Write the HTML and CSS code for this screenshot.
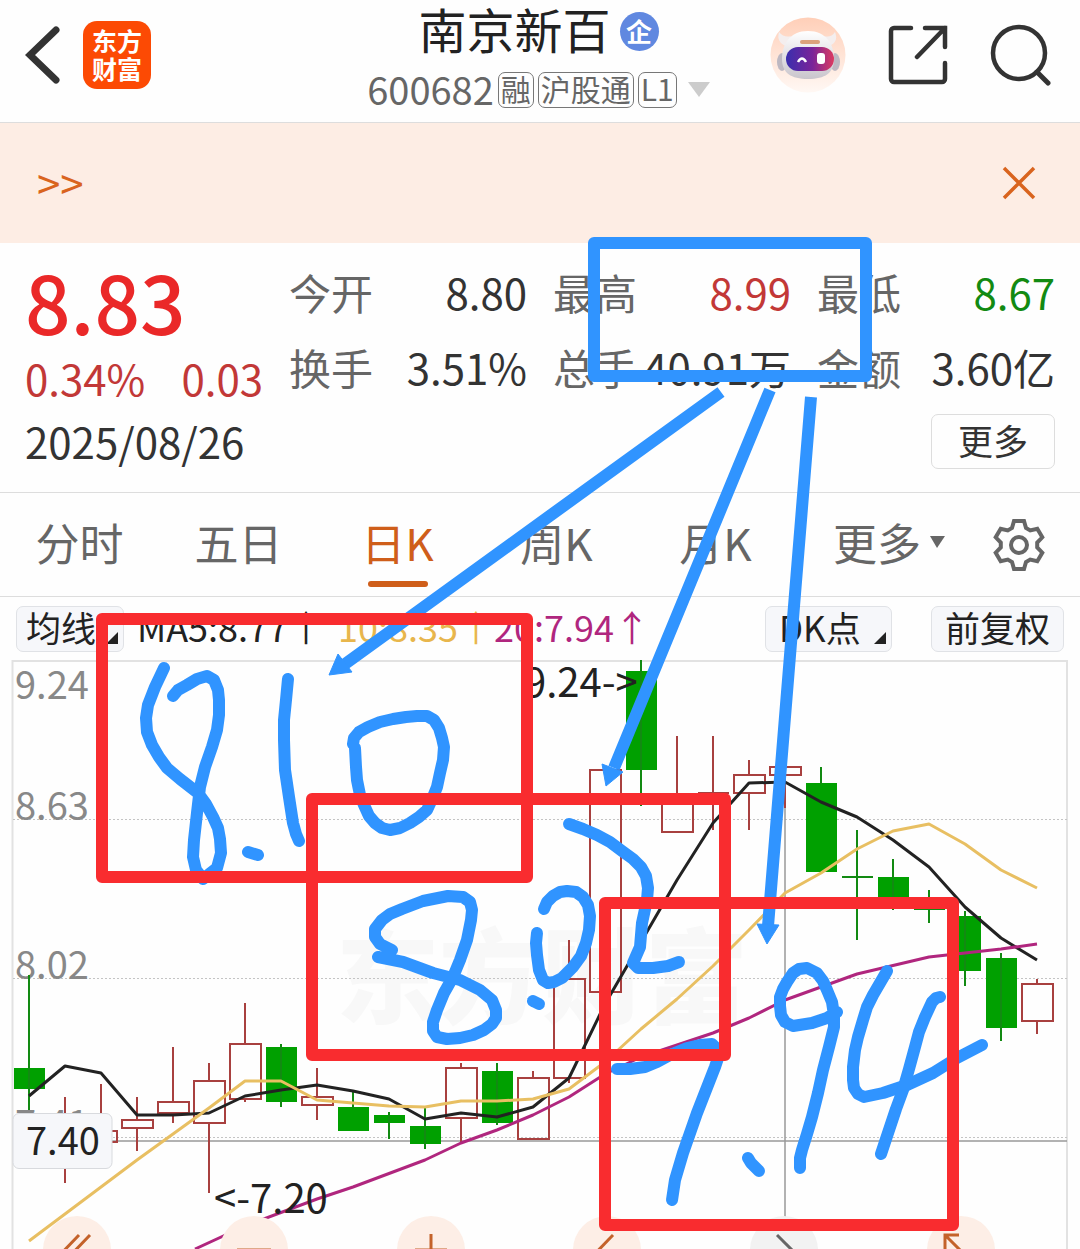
FILE: index.html
```html
<!DOCTYPE html>
<html lang="zh-CN">
<head>
<meta charset="utf-8">
<meta name="viewport" content="width=device-width, initial-scale=1">
<title>南京新百 600682</title>
<link rel="stylesheet" href="styles.css">
</head>
<body>
<div class="page">
  <header class="header">
    <div class="header-left">
      <button class="icon-btn" type="button" aria-label="返回">
        <svg width="36" height="58" viewBox="0 0 36 58"><path d="M31 4 5 29 31 54" fill="none" stroke="#333" stroke-width="7" stroke-linecap="round"/></svg>
      </button>
      <a class="logo" href="#"><span>东方</span><span>财富</span></a>
    </div>
    <div class="header-title">
      <h1 class="name">南京新百<span class="badge">企</span></h1>
      <button class="code" type="button">
        <span class="code-number">600682</span><span class="tag">融</span><span class="tag">沪股通</span><span class="tag">L1</span>
        <svg class="code-caret" width="22" height="16" viewBox="0 0 22 16"><path d="M0 0h22L11 15z" fill="#ccc"/></svg>
      </button>
    </div>
    <div class="header-right">
      <button class="icon-btn" type="button" aria-label="助手">
        <svg width="76" height="76" viewBox="0 0 76 76">
          <defs>
            <linearGradient id="halo" x1="0" y1="0" x2="0" y2="1"><stop offset="0" stop-color="#ffcfb8"/><stop offset="1" stop-color="#fff8f4"/></linearGradient>
            <linearGradient id="shell" x1="0" y1="0" x2="0" y2="1"><stop offset="0" stop-color="#fff"/><stop offset="1" stop-color="#c9c5cc"/></linearGradient>
            <linearGradient id="visor" x1="0" y1="0" x2="1" y2="0"><stop offset="0" stop-color="#3a2fae"/><stop offset=".55" stop-color="#7a2499"/><stop offset="1" stop-color="#dc3a60"/></linearGradient>
          </defs>
          <circle cx="38" cy="38" r="37.500" fill="url(#halo)"/>
          <path d="M9 15q5 6 12 4l-5 10q-10-4-7-14zM65 15q-4 6-11 4l5 10q10-4 6-14z" fill="#f4eeee"/>
          <ellipse cx="12" cy="45" rx="5" ry="9" fill="#bdb8c2"/><ellipse cx="65" cy="45" rx="5" ry="9" fill="#bdb8c2"/>
          <path d="M38 14c18 0 26 13 26 28 0 14-9 20-26 20S12 56 12 42c0-15 8-28 26-28z" fill="url(#shell)"/>
          <rect x="30" y="23" width="20" height="4" rx="2" fill="#dba27c"/>
          <rect x="16" y="30" width="48" height="24" rx="12" fill="url(#visor)"/>
          <path d="M28 45q4-7 8 0" fill="none" stroke="#fff" stroke-width="2.500"/>
          <rect x="47" y="36" width="8" height="11" rx="3" fill="#fff"/>
        </svg>
      </button>
      <button class="icon-btn" type="button" aria-label="分享">
        <svg width="60" height="60" viewBox="0 0 60 60"><path d="M23 3H6a3 3 0 0 0-3 3v48a3 3 0 0 0 3 3h48a3 3 0 0 0 3-3V38M57 22V3H37M57 3 29 32" fill="none" stroke="#333" stroke-width="4.500" stroke-linecap="round"/></svg>
      </button>
      <button class="icon-btn" type="button" aria-label="搜索">
        <svg width="62" height="62" viewBox="0 0 62 62"><path d="M47 48 58 59" stroke="#333" stroke-width="5" stroke-linecap="round"/><circle cx="29" cy="29" r="26" fill="none" stroke="#333" stroke-width="4.500"/></svg>
      </button>
    </div>
  </header>

  <section class="banner">
    <a class="banner-link" href="#">&gt;&gt;</a>
    <button class="icon-btn" type="button" aria-label="关闭">
      <svg width="34" height="34" viewBox="0 0 34 34"><path d="M2 2 32 32M32 2 2 32" stroke="#d9641e" stroke-width="3.500"/></svg>
    </button>
  </section>

  <section class="quote">
    <div class="quote-main">
      <div class="price">8.83</div>
      <div class="change"><span>0.34%</span><span>0.03</span></div>
      <time class="date" datetime="2025-08-26">2025/08/26</time>
    </div>
    <div class="quote-side">
      <dl class="stats">
        <div class="stat"><dt>今开</dt><dd>8.80</dd></div>
        <div class="stat"><dt>最高</dt><dd class="up">8.99</dd></div>
        <div class="stat"><dt>最低</dt><dd class="down">8.67</dd></div>
        <div class="stat"><dt>换手</dt><dd>3.51%</dd></div>
        <div class="stat"><dt>总手</dt><dd>40.91万</dd></div>
        <div class="stat"><dt>金额</dt><dd>3.60亿</dd></div>
      </dl>
      <button class="more" type="button">更多</button>
    </div>
  </section>

  <nav class="tabs">
    <a class="tab" href="#">分时</a>
    <a class="tab" href="#">五日</a>
    <a class="tab tab-active" href="#">日K</a>
    <a class="tab" href="#">周K</a>
    <a class="tab" href="#">月K</a>
    <button class="tab" type="button">更多<svg width="16" height="14" viewBox="0 0 16 14"><path d="M1 1h15L8 13z" fill="#666"/></svg></button>
    <button class="icon-btn" type="button" aria-label="设置">
      <svg width="54" height="54" viewBox="-27 -27 54 54" fill="none" stroke="#666" stroke-width="4"><path d="M-5-24H5L7-17 11.200-14.600 18.300-16.300 23.300-7.700 18.200-2.400V2.400L23.300 7.700 18.300 16.300 11.200 14.600 7 17 5 24H-5L-7 17-11.200 14.600-18.300 16.300-23.300 7.700-18.200 2.400V-2.400L-23.300-7.700-18.300-16.300-11.200-14.600-7-17z"/><circle r="8"/></svg>
    </button>
  </nav>

  <div class="indicators">
    <button class="chip" type="button">均线<svg width="12" height="12" viewBox="0 0 12 12"><path d="M12 0v12H0z" fill="#222"/></svg></button>
    <div class="averages">
      <span class="ma5">MA5:8.77↑</span>
      <span class="ma10">10:8.35↑</span>
      <span class="ma20">20:7.94↑</span>
    </div>
    <button class="chip chip-dk" type="button">DK点<svg width="12" height="12" viewBox="0 0 12 12"><path d="M12 0v12H0z" fill="#222"/></svg></button>
    <button class="chip" type="button">前复权</button>
  </div>

  <figure class="chart">
    <svg class="plot" viewBox="0 660 1080 589" role="img" aria-label="日K线图">
      <text class="watermark" x="336" y="1016">东方财富</text>
      <g fill="none" stroke="#e2e2e2" stroke-width="2"><path d="M12.500 1249V661H1067V1249"/></g>
      <path d="M13 819.500H1067M13 978.500H1067M13 1137.500H1067" stroke="#c4c4c4" stroke-dasharray="2 2"/>
      <path d="M13 1141H1067M785 807V1249" stroke="#999" stroke-width="1.500"/>
      <g class="axis">
        <text x="15" y="699">9.24</text>
        <text x="15" y="820">8.63</text>
        <text x="15" y="979">8.02</text>
        <text x="15" y="1138">7.41</text>
      </g>
      <g fill="none" stroke="#a8403f" stroke-width="2">
        <path d="M65 1097V1183M101 1084V1131M137 1097V1120M137 1128V1151M173 1047V1102M173 1113V1123M209 1063V1081M209 1123V1193M245 1003V1044M245 1099V1102M317 1068V1097M317 1105V1120M461 1063V1068M461 1118V1142M533 1071V1078M569 940V979M569 1078V1083M677 736V804M713 736V830M749 760V775M749 793V830M785 775V808"/>
        <path d="M86 1131h31v11H86zM122 1120h31v8h-31zM158 1102h31v11h-31zM194 1081h31v42h-31zM230 1044h31v55h-31zM302 1097h31v8h-31zM446 1068h31v50h-31zM518 1078h31v61h-31zM554 979h31v99h-31zM590 770h31v222h-31zM662 804h31v28h-31zM698 793h31M734 775h31v18h-31zM770 767h31v8h-31zM1022 984h31v37h-31zM1037 979v5M1037 1021v13"/>
      </g>
      <g fill="#00a000">
        <path d="M14 1068h31v21H14zM266 1047h31v55h-31zM338 1107h31v24h-31zM374 1115h31v8h-31zM410 1126h31v18h-31zM482 1071h31v52h-31zM626 671h31v99h-31zM806 783h31v89h-31zM878 877h31v30h-31zM950 916h31v55h-31zM986 958h31v70h-31z"/>
      </g>
      <path d="M29 975V1110M281 1044V1107M353 1091V1108M389 1112V1139M425 1108V1149M497 1063V1125M641 660V806M821 767V784M857 830V940M842 877h31M893 859V910M929 890V923M914 909h31M965 911V986M1001 953V1041" stroke="#128a12" stroke-width="2"/>
      <g fill="none" stroke-width="3" stroke-linejoin="round">
        <path stroke="#222" d="M29 1096 65 1066 101 1073 137 1115 173 1115 209 1113 245 1096 281 1090 317 1085 353 1091 389 1099 425 1119 461 1113 497 1117 533 1107 569 1078 605 1004 641 942 677 880 713 823 749 783 785 782 821 802 857 817 893 840 929 867 965 907 1001 938 1037 960"/>
        <path stroke="#e8bf62" d="M29 1241 137 1160 209 1108 245 1081 281 1081 317 1100 353 1103 389 1106 425 1107 461 1101 497 1101 533 1099 569 1089 605 1062 641 1029 677 999 713 966 749 930 785 893 821 873 857 849 893 831 929 824 965 844 1001 870 1037 888"/>
        <path stroke="#b0267e" d="M195 1249 245 1226 317 1199 353 1187 425 1160 461 1143 497 1130 533 1115 569 1097 605 1074 641 1057 677 1045 713 1033 749 1018 785 1000 857 974 929 957 965 953 1001 949 1037 944"/>
      </g>
      <g class="marks">
        <text x="524" y="697">9.24-&gt;</text>
        <text x="214" y="1213">&lt;-7.20</text>
      </g>
      <rect x="13" y="1113.500" width="99" height="55" rx="6" fill="#f6f7fa" stroke="#d8dade"/>
      <text class="cursor-price" x="26" y="1155">7.40</text>
    </svg>
    <div class="tools">
      <button class="tool" type="button" aria-label="平行线"><svg viewBox="0 0 68 68"><path d="M12 44 36 19M23 44 47 19"/></svg></button>
      <button class="tool" type="button" aria-label="水平线"><svg viewBox="0 0 68 68"><path d="M17 34H51"/></svg></button>
      <button class="tool" type="button" aria-label="十字线"><svg viewBox="0 0 68 68"><path d="M34 18V50M18 34H50"/></svg></button>
      <button class="tool" type="button" aria-label="线段"><svg viewBox="0 0 68 68"><path d="M14 46 40 19"/></svg></button>
      <button class="tool tool-off" type="button" aria-label="隐藏"><svg viewBox="0 0 68 68"><path d="M27 19 54 46"/></svg></button>
      <button class="tool" type="button" aria-label="箭头"><svg viewBox="0 0 68 68"><path d="M18 40V19H32M19 20 42 43"/></svg></button>
    </div>
  </figure>

  <svg class="notes" viewBox="0 0 1080 1249" role="img" aria-label="手写批注：8.10、8.02、7.94">
    <g class="ink">
      <rect x="594" y="243" width="272" height="133"/>
      <path d="M164 668 155 687 148 705 146 718 147 732 152 745 159 757 167 768 180 779 198 793 206 804 213 817 218 828 220 839 221 853 217 868 203 879 196 870 193 857 194 840 197 813 200 787 205 767 212 747 217 730 219 715 219 700 218 690 214 680 207 676 197 679 187 685 178 690 173 696"/>
      <path d="M248 852 258 855"/>
      <path d="M288 679 286 700 284 720 284 740 285 770 289 797 293 823 296 834 299 841"/>
      <path d="M353 744 354 738 359 732 368 727 380 722 393 719 406 717 417 716 427 716 434 720 439 728 442 738 444 747 443 760 440 773 437 787 433 797 427 810 419 817 410 823 400 828 390 830 382 828 375 823 369 816 364 805 360 795 357 780 356 767 355 748"/>
      <path d="M392 950 380 944 375 937 375 929 382 920 390 914 402 909 423 901 448 896 463 897 470 902 472 910 471 920 467 940 460 960 453 977 444 993 437 1010 433 1022 433 1031 437 1037 447 1039 460 1038 473 1035 484 1030 492 1024 496 1018 496 1010 492 1000 480 990 460 980 433 973 403 962 378 957"/>
      <path d="M533 1001 539 1004"/>
      <path d="M544 909 547 902 553 896 560 892 567 891 576 892 583 897 588 905 590 916 589 930 586 943 581 956 573 967 562 978 554 982 548 983 543 980 539 970 537 955 536 943 537 933"/>
      <path d="M569 824 583 829 597 835 610 842 622 851 633 859 641 867 646 876 648 888 647 900 642 923 640 947 633 963 638 968 653 968 668 966 679 962"/>
      <path d="M617 1069 630 1069 645 1067 657 1062 670 1055 687 1048 700 1045 712 1044 717 1049 718 1058 715 1067 697 1113 683 1153 675 1180 672 1200"/>
      <path d="M748 1158 751 1163 759 1171"/>
      <path d="M837 1012 827 1018 812 1023 793 1026 785 1022 781 1015 780 1006 780 997 783 989 787 982 793 973 799 969 807 968 817 973 823 981 827 990 832 1002 834 1015 834 1027 829 1047 823 1070 818 1093 812 1117 807 1134 802 1150 800 1158 800 1168"/>
      <path d="M887 971 880 983 873 995 867 1007 863 1020 858 1037 855 1050 853 1067 853 1080 854 1088 858 1094 864 1097 883 1093 907 1085 933 1073 957 1058 982 1045"/>
      <path d="M940 997 936 998 932 1002 925 1017 919 1032 915 1047 909 1069 903 1090 896 1109 890 1127 881 1154"/>
    </g>
    <g class="arrows">
      <path d="M721 392 345 664M770 390 614 768M811 397 768 926"/>
      <path class="arrow-head" d="M329 675 338 654 352 672zM606 786 602 764 623 772zM767 944 757 924 779 925z"/>
    </g>
    <g class="frames">
      <rect x="102" y="619" width="425" height="258"/>
      <rect x="312" y="799" width="413" height="256"/>
      <rect x="605" y="903" width="348" height="322"/>
    </g>
  </svg>
</div>
</body>
</html>
```
FILE: styles.css
```css
* { box-sizing: border-box; }

body {
  margin: 0;
  background: #fefefe;
  color: #333;
  font-family: "Noto Sans CJK SC", "Noto Sans", sans-serif;
  font-size: 42px;
}

button {
  margin: 0;
  padding: 0;
  border: 0;
  background: none;
  color: inherit;
  font: inherit;
}

a { color: inherit; text-decoration: none; }

svg { display: block; }

.page { position: relative; overflow: hidden; }

.icon-btn { display: grid; place-items: center; }

/* Header */
.header {
  display: grid;
  grid-template-columns: 1fr auto 1fr;
  height: 123px;
  padding: 0 28px 0 25px;
  border-bottom: 1px solid #ddd;
}

.header-left,
.header-right {
  display: flex;
  align-items: center;
  height: 110px;
}

.header-left { gap: 22px; }

.header-right { justify-content: flex-end; gap: 42px; }

.logo {
  display: grid;
  align-content: center;
  justify-items: center;
  width: 68px;
  height: 68px;
  padding-bottom: 3px;
  border-radius: 14px;
  background: #fc4a04;
  color: #fff;
  font-size: 25px;
  font-weight: 700;
  line-height: 28px;
}

.header-title {
  display: flex;
  flex-direction: column;
  align-items: center;
}

.name {
  display: flex;
  align-items: flex-end;
  gap: 9px;
  height: 60px;
  margin: 0;
  padding-bottom: 4px;
  color: #222;
  font-size: 48px;
  font-weight: 400;
  line-height: 56px;
}

.badge {
  width: 39px;
  height: 39px;
  margin-bottom: 5px;
  border-radius: 50%;
  background: #6088e0;
  color: #fff;
  font-size: 26px;
  font-weight: 700;
  line-height: 38px;
  text-align: center;
}

.code {
  display: flex;
  align-items: center;
  gap: 4px;
  color: #666;
  line-height: 58px;
}

.code-number { padding-bottom: 2px; font-size: 38px; }

.tag {
  height: 36px;
  padding: 0 2px;
  border: 1px solid #777;
  border-radius: 7px;
  font-size: 30px;
  line-height: 30px;
}

.code-caret { margin-left: 7px; }

/* Banner */
.banner {
  display: flex;
  align-items: center;
  justify-content: space-between;
  height: 120px;
  padding: 0 44px 0 37px;
  background: #fdede4;
}

.banner-link { padding-bottom: 4px; color: #d9641e; }

/* Quote */
.quote {
  display: grid;
  grid-template-columns: repeat(4, 1fr);
  gap: 26px;
  padding: 11px 25px 20px;
  border-bottom: 1px solid #ddd;
}

.quote-side { grid-column: span 3; }

.price {
  color: #ea2828;
  font-size: 80px;
  font-weight: 500;
  line-height: 92px;
}

.change {
  display: flex;
  justify-content: space-between;
  color: #c23837;
  line-height: 64px;
}

.date { display: block; line-height: 62px; }

.stats {
  display: grid;
  grid-template-columns: repeat(3, 1fr);
  column-gap: 26px;
  margin: 0;
}

.stat {
  display: flex;
  justify-content: space-between;
  line-height: 75px;
  white-space: nowrap;
}

.stat dt { color: #666; }
.stat dd { margin: 0; }
.stat .up { color: #c23837; }
.stat .down { color: #128a12; }

.more {
  display: block;
  width: 124px;
  height: 55px;
  margin: 10px 0 0 auto;
  padding-bottom: 4px;
  border: 1px solid #ddd;
  border-radius: 7px;
  font-size: 35px;
  line-height: 48px;
}

/* Period tabs */
.tabs {
  display: grid;
  grid-template-columns: repeat(5, 159fr) 188fr 72fr;
  height: 104px;
  padding-right: 25px;
  border-bottom: 1px solid #ddd;
}

.tab {
  position: relative;
  display: flex;
  align-items: center;
  justify-content: center;
  gap: 8px;
  padding-bottom: 6px;
  color: #666;
  font-size: 44px;
  line-height: 90px;
}

.tab-active { color: #cf5e1a; }

.tab-active::after {
  content: "";
  position: absolute;
  bottom: 9px;
  left: 50%;
  width: 60px;
  height: 6px;
  margin-left: -30px;
  border-radius: 3px;
  background: currentColor;
}

/* Indicator row */
.indicators {
  display: flex;
  align-items: center;
  height: 63px;
  padding: 0 16px;
  color: #222;
}

.chip {
  display: flex;
  align-items: center;
  justify-content: space-between;
  height: 46px;
  padding: 0 5px 4px 9px;
  border: 1px solid #e0e2e6;
  border-radius: 7px;
  background: #f6f7fa;
  font-size: 35px;
  line-height: 38px;
  white-space: nowrap;
}

.chip:first-child { width: 108px; }

.chip svg { align-self: flex-end; margin-bottom: 3px; }

.chip-dk { width: 127px; margin-right: 39px; padding-left: 13px; }

.chip:last-child { width: 133px; padding: 0 0 4px; justify-content: center; }

.averages {
  display: flex;
  flex: 1;
  padding: 0 0 6px 13px;
  font-size: 36px;
  line-height: 54px;
  white-space: nowrap;
}

.ma5 { margin-right: 14px; }
.ma10 { color: #e8b64c; }
.ma20 { color: #b0267e; }

/* Chart */
.chart {
  position: relative;
  margin: 0;
  overflow: hidden;
}

.plot { width: 100%; height: auto; }

.axis { fill: #888; font-size: 38px; }
.marks { fill: #222; font-size: 40px; }
.cursor-price { fill: #222; font-size: 38px; }
.watermark { fill: #f8f8f8; font-size: 103px; font-weight: 900; }

.tools {
  position: absolute;
  right: 0;
  bottom: 0;
  left: 0;
  display: flex;
  justify-content: space-between;
  height: 33px;
  padding: 0 85px 0 43px;
  overflow: hidden;
}

.tool {
  width: 68px;
  height: 68px;
  border-radius: 50%;
  background: #fdeee6;
}

.tool svg { fill: none; stroke: #c4622a; stroke-width: 3; }
.tool-off { background: #f2f2f2; }
.tool-off svg { stroke: #666; }

/* Annotation layer drawn over the whole page */
.notes {
  position: absolute;
  top: 0;
  left: 0;
  width: 100%;
  height: auto;
  pointer-events: none;
}

.ink,
.frames,
.arrows {
  fill: none;
  stroke: #3094ff;
  stroke-width: 12;
  stroke-linejoin: round;
}

.ink { stroke-linecap: round; }
.frames { stroke: #f92c2f; }
.arrow-head { fill: #3094ff; stroke-width: 1; }
```
